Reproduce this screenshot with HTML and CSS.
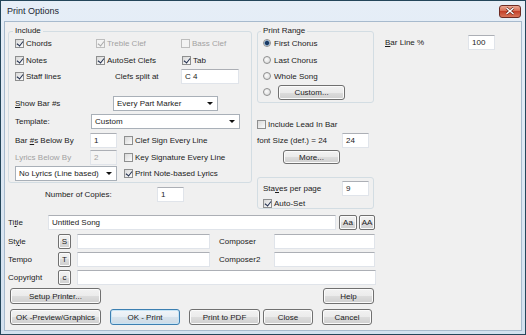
FILE: index.html
```html
<!DOCTYPE html>
<html lang="en">
<head>
  <meta charset="UTF-8">
  <title>Print Options</title>
  <link rel="stylesheet" href="styles.css">
</head>
<body>

<div class="window">
  <div class="titlebar">
    <span class="title">Print Options</span>
    <span class="close">
      <svg width="10" height="8" viewBox="0 0 10 8"><path d="M1.5 1 L8.5 7 M8.5 1 L1.5 7" stroke="#5a1c12" stroke-width="2.6"/><path d="M1.5 1 L8.5 7 M8.5 1 L1.5 7" stroke="#fff" stroke-width="1.5"/></svg>
    </span>
  </div>

  <div class="client">
    <div class="top">

      <!-- left column -->
      <div class="left-col">
        <fieldset class="include">
          <legend>Include</legend>
          <div class="row r1">
            <label class="chk w81"><span class="box on"></span>Chords</label>
            <label class="chk w85 dis-text"><span class="box dis on"></span>Treble Clef</label>
            <label class="chk dis-text"><span class="box dis"></span>Bass Clef</label>
          </div>
          <div class="row r2">
            <label class="chk w81"><span class="box on"></span>Notes</label>
            <label class="chk w86"><span class="box on"></span>AutoSet Clefs</label>
            <label class="chk"><span class="box on"></span>Tab</label>
          </div>
          <div class="row r3">
            <label class="chk w81"><span class="box on"></span>Staff lines</label>
            <span class="split-label">Clefs split at</span>
            <span class="input w58">C 4</span>
          </div>
          <div class="row r4">
            <span class="lbl w98"><u>S</u>how Bar #s</span>
            <span class="select w105">Every Part Marker<span class="arrow"></span></span>
          </div>
          <div class="row r5">
            <span class="lbl w76">Template:</span>
            <span class="select w149">Custom<span class="arrow"></span></span>
          </div>
          <div class="row r6">
            <span class="lbl w75">Bar <u>#</u>s Below By</span>
            <span class="input w27">1</span>
            <label class="chk ml7"><span class="box"></span>Clef Sign Every Line</label>
          </div>
          <div class="row r7">
            <span class="lbl w75 dis-text">Lyrics Below By</span>
            <span class="input w27 dis-input">2</span>
            <label class="chk ml7"><span class="box"></span>Key Signature Every Line</label>
          </div>
          <div class="row r8">
            <span class="select w102">No Lyrics (Line based)<span class="arrow"></span></span>
            <label class="chk ml7"><span class="box on"></span>Print Note-based Lyrics</label>
          </div>
        </fieldset>
        <div class="row copies">
          <span class="lbl w112">Number of Copies:</span>
          <span class="input w27">1</span>
        </div>
      </div>

      <!-- middle column -->
      <div class="mid-col">
        <fieldset class="range">
          <legend>Print Range</legend>
          <div class="row r1">
            <label class="rad"><span class="radio on"></span>First Chorus</label>
          </div>
          <div class="row r2">
            <label class="rad"><span class="radio"></span>Last Chorus</label>
          </div>
          <div class="row r3">
            <label class="rad"><span class="radio"></span>Whole Song</label>
          </div>
          <div class="row rc">
            <span class="radio"></span>
            <span class="btn custom">Custom...</span>
          </div>
        </fieldset>
        <div class="row lead">
          <label class="chk"><span class="box"></span>Include Lead In Bar</label>
        </div>
        <div class="row fsize">
          <span class="lbl w85">font Size (def.) = 24</span>
          <span class="input w27">24</span>
        </div>
        <div class="row more">
          <span class="btn w57">More...</span>
        </div>
        <div class="staves">
          <div class="row">
            <span class="lbl w79">Sta<u>v</u>es per page</span>
            <span class="input w27">9</span>
          </div>
          <div class="row autoset">
            <label class="chk"><span class="box on"></span>Auto-Set</label>
          </div>
        </div>
      </div>

      <!-- right column -->
      <div class="right-col">
        <div class="row">
          <span class="lbl w83"><u>B</u>ar Line %</span>
          <span class="input w27">100</span>
        </div>
      </div>
    </div>

    <div class="bottom">
      <div class="row title-row">
        <span class="lbl w40">Ti<u>t</u>le</span>
        <span class="input w288">Untitled Song</span>
        <span class="btn small aa">Aa</span>
        <span class="btn small caps">AA</span>
      </div>
      <div class="row field-row">
        <span class="lbl w50">St<u>y</u>le</span>
        <span class="btn small letter">S</span>
        <span class="input w133">&nbsp;</span>
        <span class="lbl comp">Composer</span>
        <span class="input w101">&nbsp;</span>
      </div>
      <div class="row field-row tempo">
        <span class="lbl w50">Tempo</span>
        <span class="btn small letter">T</span>
        <span class="input w133">&nbsp;</span>
        <span class="lbl comp">Composer2</span>
        <span class="input w101">&nbsp;</span>
      </div>
      <div class="row field-row copyright">
        <span class="lbl w50">Copyright</span>
        <span class="btn small letter">c</span>
        <span class="input w299">&nbsp;</span>
      </div>
      <div class="row setup-row">
        <span class="btn w91">Setup Printer...</span>
        <span class="btn w51">Help</span>
      </div>
      <div class="row button-row">
        <span class="btn w91">OK -Preview/Graphics</span>
        <span class="btn default w70">OK - Print</span>
        <span class="btn w71">Print to PDF</span>
        <span class="btn w50 close-btn">Close</span>
        <span class="btn w50">Cancel</span>
      </div>
    </div>
  </div>
</div>

</body>
</html>
```

FILE: styles.css
```css
* {
  box-sizing: border-box;
}

body {
  margin: 0;
  font-family: "Liberation Sans", Arial, sans-serif;
  font-size: 8px;
  color: #1b1b1b;
  background: #ffffff;
}

/* window frame */
.window {
  width: 526px;
  height: 335px;
  border: 1px solid #24465a;
  background: linear-gradient(#e6eef7, #d3e1ef);
  padding: 0 3px 3px;
  display: flex;
  flex-direction: column;
}

.titlebar {
  height: 20px;
  flex: none;
  display: flex;
  align-items: center;
  justify-content: space-between;
  padding: 0 1px 0 3px;
}

.title {
  font-size: 9px;
  color: #1c2733;
}

.close {
  width: 22px;
  height: 13px;
  border: 1px solid #6d2b23;
  border-radius: 3px;
  background: linear-gradient(#eaa995, #d6684f 50%, #c4412a 50%, #d8755a);
  display: flex;
  align-items: center;
  justify-content: center;
}

.client {
  flex: 1;
  background: #f0f0f0;
  border: 1px solid #a7bacd;
  padding: 4px 0 0 3px;
}

/* generic rows and widths */
.row {
  display: flex;
  align-items: center;
  flex: none;
}

.lbl {
  white-space: nowrap;
  flex: none;
}

.w27 { width: 27px; }
.w40 { width: 40px; }
.w50 { width: 50px; }
.w51 { width: 51px; }
.w57 { width: 57px; }
.w58 { width: 58px; }
.w70 { width: 70px; }
.w71 { width: 71px; }
.w75 { width: 75px; }
.w76 { width: 76px; }
.w79 { width: 79px; }
.w81 { width: 81px; }
.w83 { width: 83px; }
.w85 { width: 85px; }
.w86 { width: 86px; }
.w91 { width: 91px; }
.w98 { width: 98px; }
.w101 { width: 101px; }
.w102 { width: 102px; }
.w105 { width: 105px; }
.w112 { width: 112px; }
.w133 { width: 133px; }
.w149 { width: 149px; }
.w288 { width: 288px; }
.w299 { width: 299px; }
.ml7 { margin-left: 7px; }

.dis-text {
  color: #a2a2a2;
}

/* controls */
.chk, .rad {
  display: flex;
  align-items: center;
  gap: 2px;
  white-space: nowrap;
  flex: none;
}

.rad {
  gap: 3px;
}

.box {
  width: 9px;
  height: 9px;
  border: 1px solid #8e8f8f;
  background: linear-gradient(135deg, #d8d8d8, #fbfbfb);
  position: relative;
  flex: none;
}

.box.on::after {
  content: "";
  position: absolute;
  left: 2px;
  top: 0;
  width: 3px;
  height: 5px;
  border: solid #1f2d4d;
  border-width: 0 1.5px 1.5px 0;
  transform: rotate(38deg);
}

.box.dis {
  border-color: #bdbdbd;
  background: #f3f3f3;
}

.box.dis.on::after {
  border-color: #a9a9a9;
}

.radio {
  width: 8px;
  height: 8px;
  border: 1px solid #8e8f8f;
  border-radius: 50%;
  background: radial-gradient(circle at 40% 40%, #fbfbfb, #d5d5d5);
  flex: none;
}

.radio.on {
  background: radial-gradient(circle, #1b3a62 0 1.6px, #5d8fc3 2.3px, #e2e2e2 3px, #f7f7f7);
}

.input {
  height: 15px;
  background: #ffffff;
  border: 1px solid #e0e4ea;
  border-top-color: #acafb5;
  padding-left: 3px;
  display: flex;
  align-items: center;
  flex: none;
  white-space: nowrap;
}

.dis-input {
  background: #f4f4f4;
  color: #a2a2a2;
}

.select {
  height: 15px;
  background: #ffffff;
  border: 1px solid #a9b0b8;
  padding: 0 4px 0 3px;
  display: flex;
  align-items: center;
  justify-content: space-between;
  flex: none;
  white-space: nowrap;
}

.arrow {
  border: 3px solid transparent;
  border-top: 3px solid #111111;
  border-bottom-width: 0;
}

.btn {
  height: 16px;
  border: 1px solid #707070;
  border-radius: 3px;
  background: linear-gradient(#f2f2f2, #ebebeb 50%, #dddddd 50%, #cfcfcf);
  box-shadow: inset 0 0 0 1px #fbfbfb;
  display: flex;
  align-items: center;
  justify-content: center;
  white-space: nowrap;
  flex: none;
}

.btn.default {
  border-color: #3c7fb1;
  box-shadow: inset 0 0 0 1px #c6e4f5;
  background: linear-gradient(#f1f5f8, #e6eef4 50%, #d7e3ec 50%, #cddbe6);
}

.btn.small {
  height: 15px;
  border-radius: 2px;
}

/* group boxes */
fieldset {
  margin: 0;
  padding: 0 0 0 6px;
  border: 1px solid #d3dde3;
  border-radius: 3px;
  min-width: 0;
}

legend {
  padding: 0 2px;
  margin-left: -2px;
  line-height: 10px;
}

/* top section */
.top {
  display: flex;
  height: 187px;
}

.left-col {
  width: 244px;
  flex: none;
}

.include {
  height: 157px;
}

.r1 { height: 14px; }
.r2 { height: 16px; margin-top: 2px; }
.r3 { height: 16px; }
.r4 { height: 16px; margin-top: 11px; }
.r5 { height: 16px; margin-top: 2px; }
.r6 { height: 16px; margin-top: 3px; }
.r7 { height: 16px; margin-top: 1px; }
.r8 { height: 16px; }

.split-label {
  width: 85px;
  padding-left: 19px;
  flex: none;
}

.copies {
  height: 15px;
  margin-top: 4px;
  padding-left: 37px;
}

.mid-col {
  width: 117px;
  margin-left: 5px;
  flex: none;
}

.range {
  height: 77px;
  padding-left: 5px;
}

.rc {
  height: 16px;
  gap: 7px;
}

.custom {
  width: 67px;
  height: 15px;
}

.lead {
  height: 14px;
  margin-top: 14px;
}

.fsize {
  height: 14px;
  margin-top: 2px;
}

.more {
  height: 14px;
  margin-top: 3px;
  padding-left: 26px;
}

.more .btn {
  height: 14px;
}

.staves {
  height: 32px;
  margin-top: 13px;
  border: 1px solid #d3dde3;
  border-radius: 3px;
  padding: 3px 0 0 5px;
}

.autoset {
  height: 12px;
  margin-top: 1px;
}

.right-col {
  margin-left: 11px;
  padding-top: 9px;
}

/* bottom section */
.bottom {
  padding-top: 1px;
}

.title-row {
  height: 16px;
}

.aa {
  width: 18px;
  margin-left: 3px;
}

.caps {
  width: 16px;
  margin-left: 2px;
}

.field-row {
  height: 15px;
  margin-top: 4px;
}

.tempo {
  margin-top: 3px;
}

.copyright {
  height: 16px;
  margin-top: 2px;
}

.letter {
  width: 13px;
  margin-right: 6px;
}

.comp {
  width: 55px;
  margin-left: 9px;
}

.setup-row {
  width: 366px;
  height: 16px;
  margin-top: 3px;
  padding-left: 2px;
  justify-content: space-between;
}

.button-row {
  height: 16px;
  margin-top: 5px;
  padding-left: 2px;
  gap: 9px;
}

.button-row .close-btn {
  margin-left: -6px;
}
```
